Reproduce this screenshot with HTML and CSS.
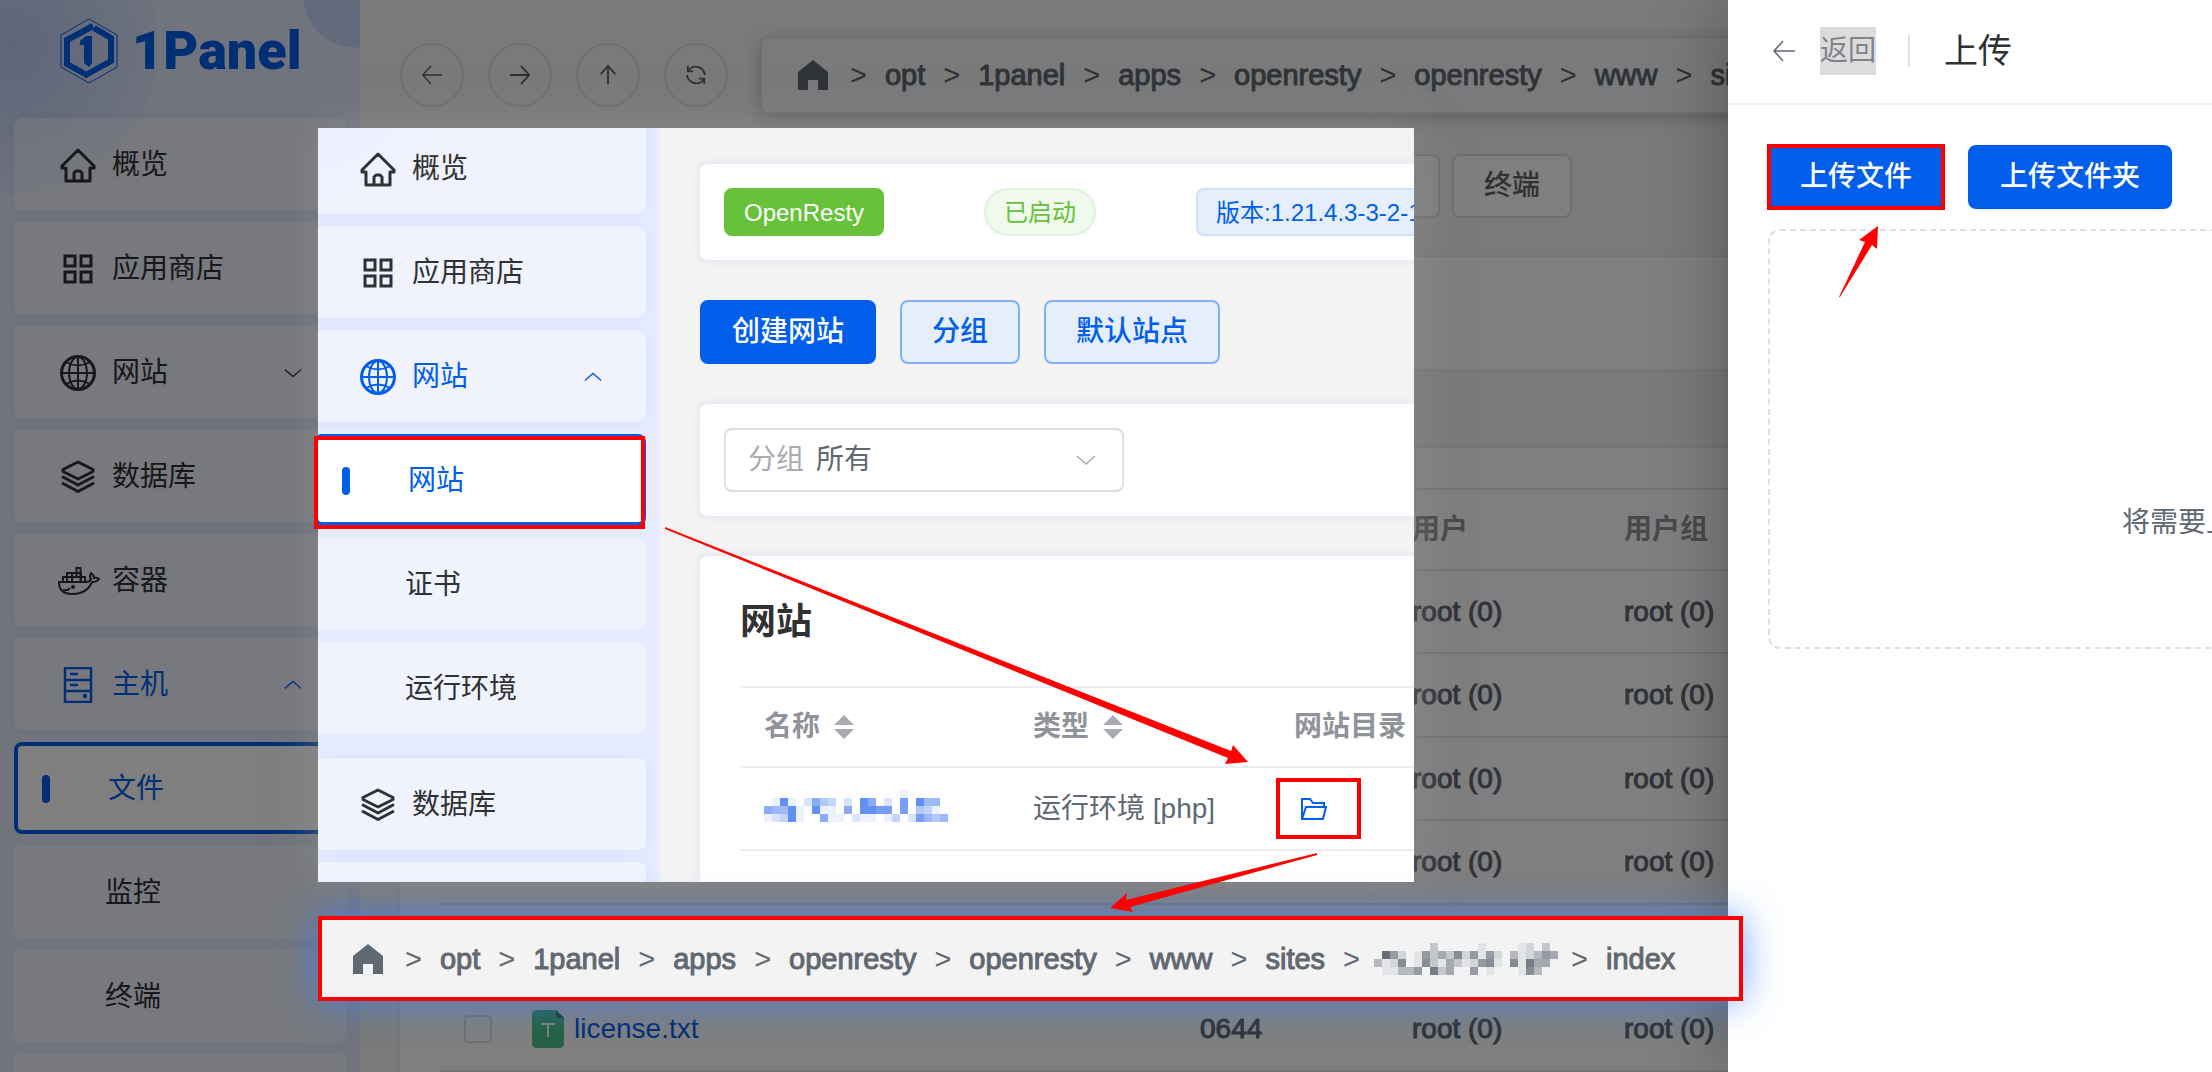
FILE: index.html
```html
<!DOCTYPE html>
<html lang="zh-CN">
<head>
<meta charset="utf-8">
<title>1Panel</title>
<link rel="stylesheet" href="styles.css">
</head>
<body>
<svg class="sprite" aria-hidden="true">
  <symbol id="i-home" viewBox="0 0 36 36"><path d="M18 3 2 19v2h4v13h24V21h4v-2zM14 34v-8l2-2h4l2 2v8" fill="none" stroke="currentColor" stroke-width="3" stroke-linejoin="round"/></symbol>
  <symbol id="i-grid" viewBox="0 0 36 36"><path d="M5 5h10v10H5zM21 5h10v10H21zM5 21h10v10H5zM21 21h10v10H21z" fill="none" stroke="currentColor" stroke-width="3"/></symbol>
  <symbol id="i-globe" viewBox="0 0 36 36"><g fill="none" stroke="currentColor" stroke-width="2"><circle cx="18" cy="18" r="16.5" stroke-width="3"/><ellipse cx="18" cy="18" rx="9" ry="16"/><path d="M18 2v32M2 18h32M6 7q12 7 24 0M6 29q12-7 24 0"/></g></symbol>
  <symbol id="i-layers" viewBox="0 0 36 36"><g fill="none" stroke="currentColor" stroke-width="3" stroke-linejoin="round"><path d="M18 3 33 10.500v2L18 20 3 12.500v-2z"/><path d="M2 17.500 18 26l16-8.500M2 24 18 32.500 34 24"/></g></symbol>
  <symbol id="i-docker" viewBox="0 0 36 36"><g fill="none" stroke="currentColor" stroke-width="2"><path d="M-1 19h27q4 0 5-3-2-3 0-6 3 2 3 5 3-1 5 1-2 3-7 3-5 12-20 12Q-1 31-1 19zM3 18v-4h22v4M7 18v-8h14v8M12 18v-8M16.500 14V5h4v13M8 14h14M3 27q5 1 7-2"/><circle cx="13" cy="24" r="1"/></g></symbol>
  <symbol id="i-server" viewBox="0 0 36 36"><g fill="none" stroke="currentColor" stroke-width="2.500"><path d="M5 1h26v34H5zM5 13h26M5 24h26M10 7h8M10 18h8"/><circle cx="25" cy="29" r="1"/></g></symbol>
  <symbol id="i-down" viewBox="0 0 20 12"><path d="m1 2 9 8 9-8" fill="none" stroke="currentColor" stroke-width="1.500"/></symbol>
  <symbol id="i-up" viewBox="0 0 20 12"><path d="m1 10 9-8 9 8" fill="none" stroke="currentColor" stroke-width="1.500"/></symbol>
  <symbol id="i-left" viewBox="0 0 24 24"><path d="M23 12H2M11 2 2 12l9 10" fill="none" stroke="currentColor" stroke-width="1.500"/></symbol>
  <symbol id="i-house" viewBox="0 0 30 30"><path d="M15 0 0 12v18h10V20h10v10h10V12z" fill="currentColor"/></symbol>
  <symbol id="i-sort" viewBox="0 0 20 26"><path d="M10 1 20 11H0zM10 25 0 15h20z" fill="currentColor"/></symbol>
</svg>

<div class="app">
  <aside class="sidebar">
    <h1 class="logo">
      <svg width="58" height="66" viewBox="0 0 58 66" aria-hidden="true"><g fill="none" stroke="currentColor"><path d="M29 1 57 17v32L29 65 1 49V17z"/><path d="M34 8 8 22v24l18 10" stroke-width="6" transform="translate(-1 0)"/><path d="M24 58 51 43V20L34 10" stroke-width="6"/></g><path d="M32 18v27l-3 4-5-4V27h-4v-4l6-5z" fill="currentColor"/></svg>
      <span>1Panel</span>
    </h1>
    <nav class="menu">
      <a class="item" href="#"><svg class="icon"><use href="#i-home"/></svg>概览</a>
      <a class="item" href="#"><svg class="icon"><use href="#i-grid"/></svg>应用商店</a>
      <a class="item" href="#"><svg class="icon"><use href="#i-globe"/></svg>网站<svg class="caret"><use href="#i-down"/></svg></a>
      <a class="item" href="#"><svg class="icon"><use href="#i-layers"/></svg>数据库</a>
      <a class="item" href="#"><svg class="icon"><use href="#i-docker"/></svg>容器</a>
      <a class="item open" href="#"><svg class="icon"><use href="#i-server"/></svg>主机<svg class="caret"><use href="#i-up"/></svg></a>
      <a class="item sub active" href="#">文件</a>
      <a class="item sub" href="#">监控</a>
      <a class="item sub" href="#">终端</a>
      <span class="item sub"></span>
    </nav>
  </aside>

  <main class="content">
    <div class="pathbar">
      <button class="round" aria-label="后退"><svg><use href="#i-left"/></svg></button>
      <button class="round" aria-label="前进"><svg viewBox="0 0 24 24"><path d="M1 12h21M13 2l9 10-9 10"/></svg></button>
      <button class="round" aria-label="上级"><svg viewBox="0 0 24 24"><path d="M12 22V2M4 11l8-9 8 9"/></svg></button>
      <button class="round" aria-label="刷新"><svg viewBox="0 0 24 24"><path d="M3 2v6h6M3 8q4-6 10-5 7 1 9 9M21 22v-6h-6M21 16q-4 6-10 5-7-1-9-9"/></svg></button>
      <nav class="crumbs top-crumbs">
        <svg class="house"><use href="#i-house"/></svg>
        <i>&gt;</i><a href="#">opt</a><i>&gt;</i><a href="#">1panel</a><i>&gt;</i><a href="#">apps</a><i>&gt;</i><a href="#">openresty</a><i>&gt;</i><a href="#">openresty</a><i>&gt;</i><a href="#">www</a><i>&gt;</i><a href="#">sites</a>
      </nav>
    </div>
    <div class="toolbar">
      <button class="plain" aria-label="更多"></button>
      <button class="plain">终端</button>
    </div>
    <section class="band"></section>
    <section class="files">
      <table>
        <colgroup><col class="c-check"><col class="c-name"><col class="c-mode"><col class="c-mode"><col></colgroup>
        <thead><tr><th></th><th></th><th></th><th>用户</th><th>用户组</th></tr></thead>
        <tbody>
          <tr><td></td><td></td><td></td><td>root (0)</td><td>root (0)</td></tr>
          <tr><td></td><td></td><td></td><td>root (0)</td><td>root (0)</td></tr>
          <tr><td></td><td></td><td></td><td>root (0)</td><td>root (0)</td></tr>
          <tr><td></td><td></td><td></td><td>root (0)</td><td>root (0)</td></tr>
          <tr><td></td><td></td><td></td><td></td><td></td></tr>
          <tr>
            <td><input type="checkbox" aria-label="license.txt"></td>
            <td><a class="file" href="#"><svg width="32" height="38" viewBox="0 0 32 38" aria-hidden="true"><path d="M5 0h19l8 8v25q0 5-5 5H5q-5 0-5-5V5q0-5 5-5z" fill="#4cc38a"/><path d="M24 0v5q0 3 3 3h5z" fill="#208060"/><path d="M9 14h14M16 14v13" stroke="#fff" stroke-width="2"/></svg>license.txt</a></td>
            <td>0644</td><td>root (0)</td><td>root (0)</td>
          </tr>
        </tbody>
      </table>
    </section>
  </main>

  <div class="mask"></div>

  <aside class="drawer">
    <header>
      <svg class="back"><use href="#i-left"/></svg>
      <a class="back-text" href="#">返回</a>
      <span class="rule"></span>
      <h2>上传</h2>
    </header>
    <div class="drawer-body">
      <div class="row">
        <button class="primary marked">上传文件</button>
        <button class="primary">上传文件夹</button>
      </div>
      <div class="drop">将需要上传的文件</div>
    </div>
  </aside>

  <section class="window">
    <nav class="menu window-menu">
      <a class="item" href="#"><svg class="icon"><use href="#i-home"/></svg>概览</a>
      <a class="item" href="#"><svg class="icon"><use href="#i-grid"/></svg>应用商店</a>
      <a class="item open" href="#"><svg class="icon"><use href="#i-globe"/></svg>网站<svg class="caret"><use href="#i-up"/></svg></a>
      <a class="item sub active" href="#">网站</a>
      <a class="item sub" href="#">证书</a>
      <a class="item sub last" href="#">运行环境</a>
      <a class="item" href="#"><svg class="icon"><use href="#i-layers"/></svg>数据库</a>
      <span class="item"></span>
    </nav>
    <div class="window-main">
      <div class="card status">
        <span class="tag solid">OpenResty</span>
        <span class="tag pill">已启动</span>
        <span class="tag version">版本:1.21.4.3-3-2-1</span>
      </div>
      <div class="row actions">
        <button class="primary">创建网站</button>
        <button class="soft">分组</button>
        <button class="soft">默认站点</button>
      </div>
      <div class="card filter">
        <label for="group">分组</label>
        <select id="group"><option>所有</option></select>
        <svg class="caret"><use href="#i-down"/></svg>
      </div>
      <div class="card sites">
        <h2>网站</h2>
        <table>
          <colgroup><col class="c-site"><col class="c-type"><col></colgroup>
          <thead><tr><th>名称<svg class="sort"><use href="#i-sort"/></svg></th><th>类型<svg class="sort"><use href="#i-sort"/></svg></th><th>网站目录</th></tr></thead>
          <tbody><tr>
            <td><svg class="mosaic blue" viewBox="0 0 23 4" data-rows="00000000000000000100000,01810264302086020708550,65581081106088770704310,12381006110211013027545"></svg></td>
            <td>运行环境 [php]</td>
            <td><svg class="folder" viewBox="0 0 26 24" aria-label="打开目录"><path d="M1 22V2h8l3 4h11v4M1 22 5 10h20l-3 12z"/></svg></td>
          </tr></tbody>
        </table>
      </div>
    </div>
  </section>

  <nav class="crumbs strip">
    <svg class="house"><use href="#i-house"/></svg>
    <i>&gt;</i><a href="#">opt</a><i>&gt;</i><a href="#">1panel</a><i>&gt;</i><a href="#">apps</a><i>&gt;</i><a href="#">openresty</a><i>&gt;</i><a href="#">openresty</a><i>&gt;</i><a href="#">www</a><i>&gt;</i><a href="#">sites</a><i>&gt;</i><svg class="mosaic gray" viewBox="0 0 23 4" data-rows="00000003000001000012030,09620163537261620412465,41270173153126710718550,01144608350060100017400"></svg><i>&gt;</i><a href="#">index</a>
  </nav>

  <svg class="marks" aria-hidden="true">
    <path d="M665 527 1231 751l2-6 15 17-23 2 3-6L665 529z"/>
    <path d="M1317 853 1126 900l1-7-17 15 23 4-3-5 187-52z"/>
    <path d="m1839 297 26-55-6-2 19-14-1 23-5-4-32 52z"/>
    <path class="frame" d="M316 438h327v89H316zM1278 780h81v57h-81z"/>
  </svg>
</div>
<script src="script.js"></script>
</body>
</html>
```
FILE: styles.css
```css
* { box-sizing: border-box; }
body {
  margin: 0;
  font-family: "Liberation Sans", "Noto Sans CJK SC", sans-serif;
  font-size: 28px;
  line-height: 40px;
  color: #606872;
}
a { color: inherit; text-decoration: none; }
button { font: inherit; font-weight: 500; white-space: nowrap; }
h1, h2 { margin: 0; }
table { width: 100%; border-collapse: collapse; table-layout: fixed; }
th, td { padding: 0 24px; text-align: left; white-space: nowrap; }
.sprite { display: none; }

.app { position: relative; display: flex; height: 100vh; overflow: hidden; background: #f4f4f4; }

.sidebar {
  flex: 0 0 360px;
  background:
    radial-gradient(circle at 355px -4px, #c8d6f6 0, #c4d4f8 51px, transparent 52px),
    radial-gradient(circle at 10px 45px, #bccbf2 0, #dbe4fb 149px, transparent 150px),
    #e4e9fb;
}
.logo {
  display: flex;
  align-items: center;
  gap: 14px;
  height: 118px;
  padding: 0 0 16px 60px;
  color: #005eeb;
  font: 900 54px/64px Roboto, sans-serif;
}
.menu { display: flex; flex-direction: column; gap: 12px; padding: 0 14px; color: #303133; }
.item {
  display: flex;
  align-items: center;
  gap: 16px;
  flex: 0 0 92px;
  padding: 2px 44px 0 46px;
  border-radius: 8px;
  background: rgba(255, 255, 255, .4);
  box-shadow: 0 0 12px rgba(0, 94, 235, .08);
}
.item.sub { padding-left: 91px; box-shadow: none; }
.item.open { color: #005eeb; }
.item.active { gap: 58px; padding-left: 24px; border: 4px solid #005eeb; background: #fff; color: #005eeb; }
.item.active::before { content: ""; width: 8px; height: 28px; border-radius: 4px; background: #005eeb; }
.icon { width: 36px; height: 36px; overflow: visible; }
#i-docker { overflow: visible; }
.caret { width: 18px; height: 12px; margin-left: auto; }

.content { flex: 1; min-width: 0; padding: 36px 0 0 40px; }
.pathbar { display: flex; align-items: center; gap: 24px; }
.round {
  display: grid;
  place-items: center;
  flex: 0 0 64px;
  height: 64px;
  padding: 0;
  border: 2px solid #dcdfe6;
  border-radius: 50%;
  background: transparent;
  color: #606266;
}
.round svg { width: 22px; height: 22px; fill: none; stroke: currentColor; stroke-width: 2; }
.crumbs { display: flex; align-items: center; font-size: 29px; white-space: nowrap; -webkit-text-stroke: 1px currentColor; }
.crumbs i { margin: 0 18px; font-style: normal; -webkit-text-stroke: 0; }
.house { flex: none; width: 30px; height: 30px; margin-right: 4px; }
.top-crumbs {
  flex: 1;
  height: 78px;
  margin-left: 8px;
  padding-left: 36px;
  border: 2px solid #dcdfe6;
  border-radius: 8px;
  box-shadow: 0 4px 16px rgba(0, 0, 0, .2);
}
.toolbar { display: flex; gap: 12px; margin-top: 40px; padding-left: 920px; }
.plain { width: 120px; height: 64px; border: 2px solid #dcdfe6; border-radius: 8px; background: #fff; color: #606266; }
.band { height: 112px; margin: 39px 40px 0 0; background: #fff; box-shadow: 0 0 4px rgba(0, 0, 60, .1); }
.files { margin: 79px 40px 0 0; padding: 40px 0 0 40px; background: #fff; box-shadow: 0 0 4px rgba(0, 0, 60, .1); }
.c-check { width: 68px; }
.c-name { width: 668px; }
.c-mode { width: 212px; }
.files th, .files td { height: 83px; border-bottom: 2px solid #e4e7f0; }
.files tr:nth-child(even) td { height: 84px; }
.files td { -webkit-text-stroke: 1px currentColor; }
.files th { height: 81px; border-top: 2px solid #e4e7f0; color: #909399; }
.files input { display: block; appearance: none; width: 28px; height: 28px; margin: 0; border: 2px solid #dcdfe6; border-radius: 4px; }
.file { display: flex; align-items: center; gap: 10px; color: #005eeb; -webkit-text-stroke: 0; }

.mask { position: absolute; inset: 0; background: rgba(0, 0, 0, .5); }

.drawer { position: absolute; inset: 0 0 0 auto; width: 484px; overflow: hidden; background: #fff; box-shadow: 0 0 70px rgba(0, 0, 0, .3); }
.drawer header { display: flex; align-items: center; height: 105px; padding: 0 44px 2px; border-bottom: 2px solid #f2f2f2; }
.back { width: 24px; height: 24px; }
.back-text { margin-left: 24px; padding: 4px 0; background: #dcdcdc; color: #80838a; }
.rule { width: 2px; height: 32px; margin: 0 34px 0 32px; background: #dcdfe6; }
.drawer h2 { color: #303133; font-size: 34px; font-weight: 400; }
.drawer-body { padding: 40px 0 0 40px; }
.row { display: flex; gap: 24px; }
.primary, .soft { height: 64px; padding: 0 30px; border: 2px solid #005eeb; border-radius: 8px; background: #005eeb; color: #fff; }
.marked { outline: 4px solid #f00; outline-offset: -3px; border-radius: 0; }
.soft { border-color: #80aff5; background: #e5eefd; color: #005eeb; }
.drop {
  width: 1100px;
  height: 420px;
  margin-top: 20px;
  padding: 272px 0 0 352px;
  border: 2px dashed #dcdfe6;
  border-radius: 12px;
  white-space: nowrap;
}

.window {
  position: absolute;
  left: 318px;
  top: 128px;
  display: flex;
  width: 1096px;
  height: 754px;
  overflow: hidden;
  background: #f3f3f3;
  box-shadow: 0 0 40px rgba(150, 150, 150, .5);
}
.window-menu {
  flex: 0 0 360px;
  margin: -6px 0 0 -18px;
  background:
    radial-gradient(circle at 10px -73px, #dbe4fb 0, #e2eafd 149px, transparent 150px),
    #e6ecfe;
}
.window-menu .last { margin-bottom: 12px; }
.window-main { flex: 0 0 1100px; padding: 36px 0 0 40px; }
.card { border-radius: 8px; background: #fff; box-shadow: 0 0 10px rgba(0, 94, 235, .1); }
.status { display: flex; align-items: center; gap: 100px; height: 96px; padding: 0 24px; }
.tag { flex: none; height: 48px; padding: 0 18px; border: 2px solid; border-radius: 8px; font-size: 24px; line-height: 46px; white-space: nowrap; }
.solid { border-color: #67c23a; background: #67c23a; color: #fff; }
.pill { border-color: #e1f3d8; border-radius: 24px; background: #f0f9eb; color: #67c23a; }
.version { border-color: #ccdffb; background: #e5eefd; color: #005eeb; }
.actions { margin: 40px 0; }
.filter { display: flex; align-items: center; height: 112px; padding: 0 24px; }
.filter label { width: 68px; padding-left: 24px; color: #a8abb2; white-space: nowrap; }
.filter select {
  appearance: none;
  width: 400px;
  height: 64px;
  margin-left: -68px;
  padding: 0 0 0 90px;
  border: 2px solid #dcdfe6;
  border-radius: 8px;
  background: transparent;
  color: inherit;
  font: inherit;
}
.filter .caret { width: 22px; margin-left: -49px; color: #a8abb2; }
.sites { height: 400px; margin-top: 40px; padding: 40px 0 0 40px; }
.sites h2 { height: 90px; color: #303133; font-size: 36px; line-height: 52px; }
.c-site { width: 269px; }
.c-type { width: 261px; }
.sites th { height: 80px; border-top: 2px solid #ebeef5; border-bottom: 2px solid #ebeef5; color: #909399; }
.sites td { height: 83px; border-bottom: 2px solid #ebeef5; }
.sort { width: 20px; height: 26px; margin-left: 14px; color: #a8abb2; vertical-align: -4px; }
.mosaic { display: block; flex: none; width: 184px; height: 32px; shape-rendering: crispEdges; }
.mosaic.blue { margin-bottom: 6px; fill: #3b75ef; }
.mosaic.gray { margin: 0 -5px 0 -4px; fill: #585f6c; }
.folder { display: block; width: 26px; height: 24px; margin-left: 7px; fill: none; stroke: #005eeb; stroke-width: 2; }

.strip {
  position: absolute;
  left: 318px;
  top: 916px;
  width: 1425px;
  height: 85px;
  padding-left: 31px;
  border: 4px solid #f00;
  background: #f3f3f3;
  box-shadow: 0 0 36px rgba(60, 130, 255, .7);
}
.marks { position: absolute; inset: 0; width: 100%; height: 100%; fill: #f00; pointer-events: none; }
.frame { fill: none; stroke: #f00; stroke-width: 4; }
```
FILE: script.js
```js
// Each digit is the strength of one pixelated cell, 0 being empty.
document.querySelectorAll('.mosaic').forEach(function (svg) {
  svg.dataset.rows.split(',').forEach(function (row, y) {
    Array.from(row).forEach(function (digit, x) {
      if (digit === '0') return;
      var cell = document.createElementNS('http://www.w3.org/2000/svg', 'rect');
      cell.setAttribute('x', x);
      cell.setAttribute('y', y);
      cell.setAttribute('width', 1);
      cell.setAttribute('height', 1);
      cell.setAttribute('fill-opacity', digit / 10);
      svg.appendChild(cell);
    });
  });
});
```
